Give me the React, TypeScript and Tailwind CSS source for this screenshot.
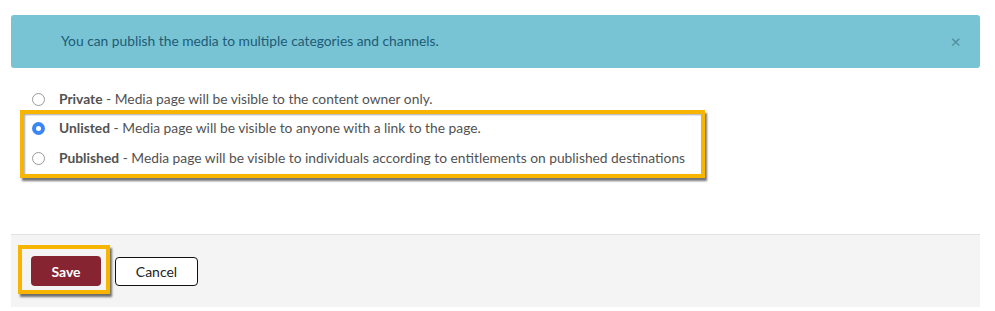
import React, { useState } from "react";

type Option = {
  id: string;
  label: string;
  text: string;
};

const options: Option[] = [
  { id: "private", label: "Private", text: "Media page will be visible to the content owner only." },
  { id: "unlisted", label: "Unlisted", text: "Media page will be visible to anyone with a link to the page." },
  {
    id: "published",
    label: "Published",
    text: "Media page will be visible to individuals according to entitlements on published destinations",
  },
];

const Radio = ({ checked }: { checked: boolean }) =>
  checked ? (
    <span className="w-[13px] h-[13px] rounded-full bg-[#3b86f5] flex items-center justify-center shrink-0">
      <span className="w-[5px] h-[5px] rounded-full bg-white" />
    </span>
  ) : (
    <span className="w-[13px] h-[13px] rounded-full border border-[#9a9a9a] bg-white shrink-0" />
  );

const OptionRow = ({
  option,
  checked,
  onSelect,
  className,
}: {
  option: Option;
  checked: boolean;
  onSelect: () => void;
  className: string;
}) => (
  <div className={`flex items-center cursor-pointer ${className}`} onClick={onSelect}>
    <Radio checked={checked} />
    <span className="ml-[14px] text-[13.8px] text-[#525252] whitespace-nowrap">
      <span className="font-bold">{option.label}</span> - {option.text}
    </span>
  </div>
);

export default function App() {
  const [value, setValue] = useState("unlisted");

  return (
    <div className="w-[995px] h-[311px] bg-white pt-[15px] pl-[11px] pr-[15px] font-['Lato','Liberation_Sans',sans-serif]">
      {/* Info alert */}
      <div className="h-[53px] rounded-[3px] bg-[#78c4d4] flex items-center justify-between pl-[50px] pr-[19px]">
        <span className="text-[13.8px] text-[#1e5b76]">
          You can publish the media to multiple categories and channels.
        </span>
        <span className="text-[18px] leading-none text-[#4f8d9c] -mt-[1px]">×</span>
      </div>

      {/* Options */}
      <OptionRow
        option={options[0]}
        checked={value === "private"}
        onSelect={() => setValue("private")}
        className="mt-[19px] h-[24px] pl-[21px]"
      />
      <div className="mt-[-1px] ml-[9px] w-[685px] border-[4px] border-[#f7b500] shadow-[2px_3px_2px_rgba(0,0,0,0.55),inset_1px_1px_2px_rgba(0,0,0,0.35)] bg-white">
        <OptionRow
          option={options[1]}
          checked={value === "unlisted"}
          onSelect={() => setValue("unlisted")}
          className="h-[28px] pl-[8px]"
        />
        <OptionRow
          option={options[2]}
          checked={value === "published"}
          onSelect={() => setValue("published")}
          className="h-[32px] pl-[8px]"
        />
      </div>

      {/* Footer */}
      <div className="mt-[56px] w-[969px] bg-[#f4f4f4] border-t border-[#e2e2e2] pt-[10px] pb-[13px] pl-[7px] flex items-center gap-[5px]">
        <div className="border-[4px] border-[#f7b500] shadow-[2px_3px_2px_rgba(0,0,0,0.55)] pl-[9px] pr-[5px] pt-[7px] pb-[4px]">
          <button className="w-[70px] h-[30px] rounded-[4px] bg-[#862432] text-white text-[14px] font-bold">
            Save
          </button>
        </div>
        <button className="w-[83px] h-[29px] rounded-[4px] bg-white border border-[#111111] text-[#222222] text-[14px] mt-[3px]">
          Cancel
        </button>
      </div>
    </div>
  );
}
